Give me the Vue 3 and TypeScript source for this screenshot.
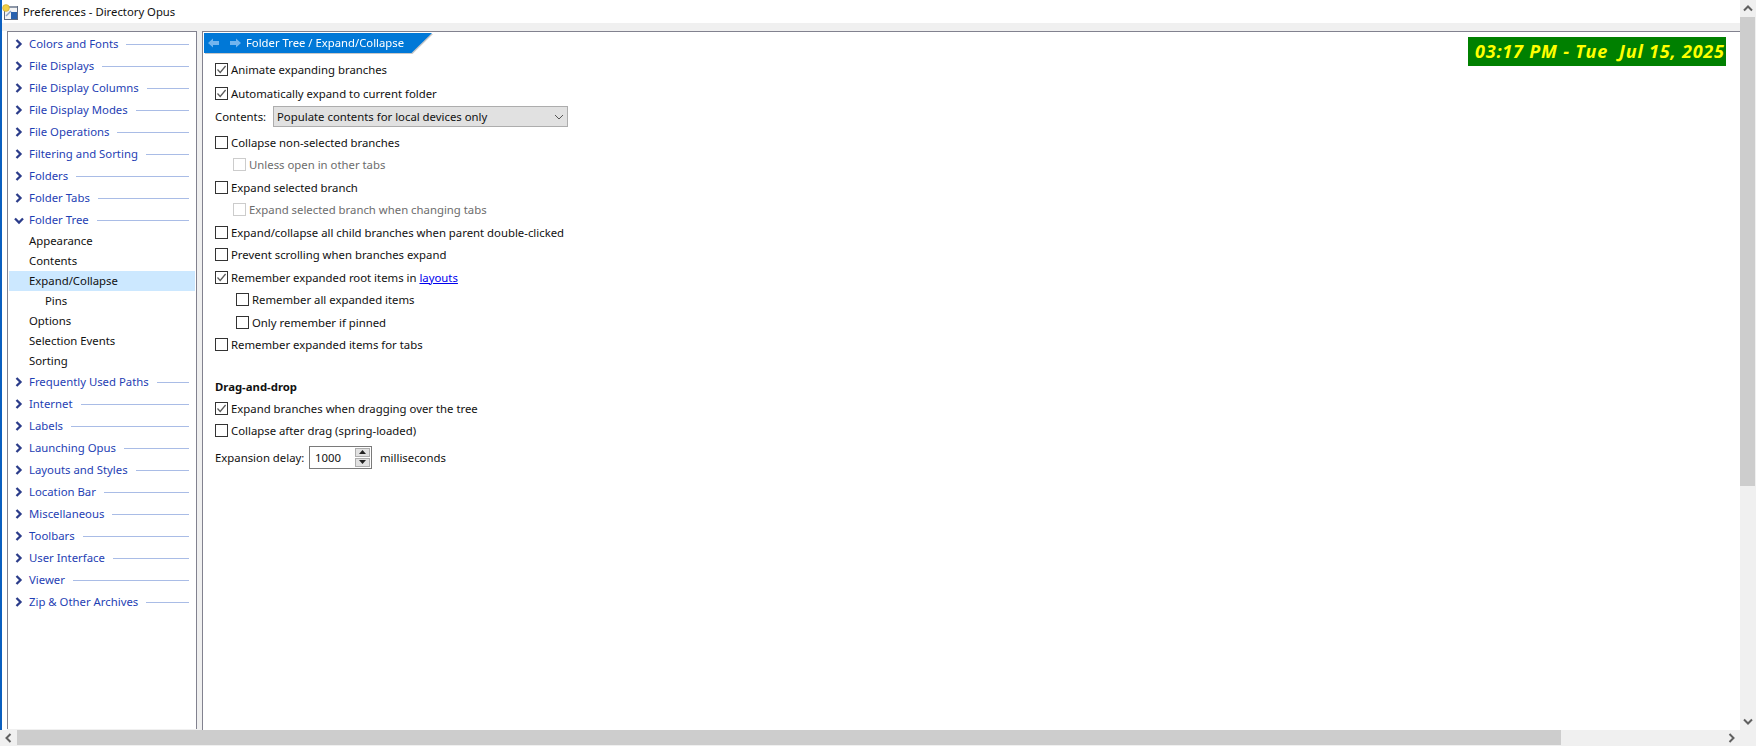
<script setup lang="ts">
interface TreeItem { label: string; kind: 'top' | 'open' | 'sub' | 'sel' | 'deep' }
interface Row {
  label: string; h: number; checked?: boolean; indent?: 'dis' | 'on'; link?: string; kind?: 'head' | 'space'
}
const clock = '03:17 PM - Tue  Jul 15, 2025'
const topA = ['Colors and Fonts','File Displays','File Display Columns','File Display Modes','File Operations','Filtering and Sorting','Folders','Folder Tabs']
const topB = ['Frequently Used Paths','Internet','Labels','Launching Opus','Layouts and Styles','Location Bar','Miscellaneous','Toolbars','User Interface','Viewer','Zip & Other Archives']
const tree: TreeItem[] = [
  ...topA.map((label) => ({ label, kind: 'top' as const })),
  { label: 'Folder Tree', kind: 'open' },
  { label: 'Appearance', kind: 'sub' },
  { label: 'Contents', kind: 'sub' },
  { label: 'Expand/Collapse', kind: 'sel' },
  { label: 'Pins', kind: 'deep' },
  { label: 'Options', kind: 'sub' },
  { label: 'Selection Events', kind: 'sub' },
  { label: 'Sorting', kind: 'sub' },
  ...topB.map((label) => ({ label, kind: 'top' as const })),
]
const groupA: Row[] = [
  { label: 'Animate expanding branches', h: 23, checked: true },
  { label: 'Automatically expand to current folder', h: 24, checked: true },
]
const groupB: Row[] = [
  { label: 'Collapse non-selected branches', h: 22 },
  { label: 'Unless open in other tabs', h: 23, indent: 'dis' },
  { label: 'Expand selected branch', h: 22 },
  { label: 'Expand selected branch when changing tabs', h: 23, indent: 'dis' },
  { label: 'Expand/collapse all child branches when parent double-clicked', h: 22 },
  { label: 'Prevent scrolling when branches expand', h: 23 },
  { label: 'Remember expanded root items in ', h: 22, checked: true, link: 'layouts' },
  { label: 'Remember all expanded items', h: 23, indent: 'on' },
  { label: 'Only remember if pinned', h: 22, indent: 'on' },
  { label: 'Remember expanded items for tabs', h: 23 },
  { label: '', h: 20, kind: 'space' },
  { label: 'Drag-and-drop', h: 21, kind: 'head' },
  { label: 'Expand branches when dragging over the tree', h: 22, checked: true },
  { label: 'Collapse after drag (spring-loaded)', h: 22 },
]
function hasChevron(k: TreeItem['kind']) { return k === 'top' || k === 'open' }
</script>

<template>
  <div class="app">
    <div class="window">
      <div class="titlebar">
        <svg class="appicon" width="16" height="16" viewBox="0 0 16 16">
          <rect x="2.5" y="2.5" width="13" height="13" fill="#f4f4f4" stroke="#5f6b80" />
          <rect x="9" y="8" width="6" height="7" fill="#2a62ae" />
          <path d="M4 12 L9 7" stroke="#8aa2c8" stroke-width="1.5" />
          <rect x="7" y="2" width="8" height="2" fill="#8d97a8" />
          <circle cx="4" cy="4" r="3.4" fill="#f2d045" stroke="#c9a52b" stroke-width=".6" />
        </svg>
        <span class="title">Preferences - Directory Opus</span>
      </div>
      <div class="body">
        <nav class="tree">
          <div v-for="item in tree" :key="item.label" class="node" :class="item.kind">
            <svg v-if="item.kind === 'top'" class="chev" width="8" height="10" viewBox="0 0 8 10">
              <path d="M1.5 1 L5.5 5 L1.5 9" fill="none" stroke="#2b3c8a" stroke-width="2.3" />
            </svg>
            <svg v-else-if="item.kind === 'open'" class="chev chev-open" width="10" height="8" viewBox="0 0 10 8">
              <path d="M1 1.5 L5 5.5 L9 1.5" fill="none" stroke="#2b3c8a" stroke-width="2.3" />
            </svg>
            <span class="nlabel">{{ item.label }}</span>
            <span v-if="hasChevron(item.kind)" class="rule"></span>
          </div>
        </nav>
        <main class="panel">
          <div class="banner-wrap">
            <div class="banner">
              <svg width="12" height="10" viewBox="0 0 12 10" class="arrow-l">
                <path d="M0 5 L5 0.5 V3 H11 V7 H5 V9.5 Z" fill="#73b5ee" />
              </svg>
              <svg width="12" height="10" viewBox="0 0 12 10" class="arrow-r">
                <path d="M12 5 L7 0.5 V3 H1 V7 H7 V9.5 Z" fill="#73b5ee" />
              </svg>
              <span class="crumb">Folder Tree / Expand/Collapse</span>
            </div>
          </div>
          <div class="clock">{{ clock }}</div>
          <div class="form">
            <div v-for="r in groupA" :key="r.label" class="row" :class="'h' + r.h">
              <span class="box"><svg v-if="r.checked" width="11" height="11" viewBox="0 0 11 11"><path d="M1.5 5.5 L4.2 8.4 L9.6 2" fill="none" stroke="#5a5a5a" stroke-width="1.3" /></svg></span>
              <span class="rlabel">{{ r.label }}</span>
            </div>
            <div class="row combo-row">
              <span class="combo-label">Contents:</span>
              <div class="combo">
                <span>Populate contents for local devices only</span>
                <svg width="10" height="6" viewBox="0 0 10 6"><path d="M1 1 L5 5 L9 1" fill="none" stroke="#555" stroke-width="1" /></svg>
              </div>
            </div>
            <template v-for="r in groupB" :key="r.label + r.h">
              <div v-if="r.kind === 'space'" class="spacer"></div>
              <div v-else-if="r.kind === 'head'" class="row head" :class="'h' + r.h">{{ r.label }}</div>
              <div v-else class="row" :class="['h' + r.h, r.indent]">
                <span class="box"><svg v-if="r.checked" width="11" height="11" viewBox="0 0 11 11"><path d="M1.5 5.5 L4.2 8.4 L9.6 2" fill="none" stroke="#5a5a5a" stroke-width="1.3" /></svg></span>
                <span class="rlabel">{{ r.label }}<a v-if="r.link" class="link">{{ r.link }}</a></span>
              </div>
            </template>
            <div class="row spin-row">
              <span class="spin-label">Expansion delay:</span>
              <div class="spin">
                <span>1000</span>
                <div class="btns">
                  <div class="btn"><svg width="7" height="4" viewBox="0 0 7 4"><path d="M3.5 0 L7 4 H0 Z" fill="#222" /></svg></div>
                  <div class="btn"><svg width="7" height="4" viewBox="0 0 7 4"><path d="M3.5 4 L7 0 H0 Z" fill="#222" /></svg></div>
                </div>
              </div>
              <span class="ms">milliseconds</span>
            </div>
          </div>
        </main>
      </div>
    </div>
    <div class="vbar">
      <div class="sbtn"><svg width="10" height="7" viewBox="0 0 10 7"><path d="M1 5.5 L5 1.5 L9 5.5" fill="none" stroke="#606060" stroke-width="2" /></svg></div>
      <div class="vthumb"></div>
      <div class="vtrack"></div>
      <div class="sbtn"><svg width="10" height="7" viewBox="0 0 10 7"><path d="M1 1.5 L5 5.5 L9 1.5" fill="none" stroke="#606060" stroke-width="2" /></svg></div>
    </div>
    <div class="hbar">
      <div class="sbtn-h"><svg width="7" height="10" viewBox="0 0 7 10"><path d="M5.5 1 L1.5 5 L5.5 9" fill="none" stroke="#606060" stroke-width="2" /></svg></div>
      <div class="hthumb"></div>
      <div class="htrack"></div>
      <div class="sbtn-h"><svg width="7" height="10" viewBox="0 0 7 10"><path d="M1.5 1 L5.5 5 L1.5 9" fill="none" stroke="#606060" stroke-width="2" /></svg></div>
    </div>
    <div class="corner"></div>
  </div>
</template>

<style>
html, body { margin: 0; background: #fff; overflow: hidden; }
</style>

<style scoped>
.app {
  width: 1756px; height: 746px; display: grid;
  grid-template-columns: 1740px 16px; grid-template-rows: 730px 16px;
  font-family: "Noto Sans", "Open Sans", sans-serif; font-size: 11.35px; color: #111;
  overflow: hidden;
}
.window { display: flex; flex-direction: column; border-left: 2px solid #0b5fbf; min-width: 0; background: #fff; }
.titlebar { height: 23px; display: flex; align-items: center; background: #fff; flex: none; }
.appicon { flex: none; }
.title { margin-left: 5px; font-size: 11.3px; color: #111; }
.body {
  flex: 1; display: flex; gap: 5px; padding-left: 5px; min-height: 0;
  background: linear-gradient(#f0f0f0, #f0f0f0) 0 0 / 100% 8px no-repeat, linear-gradient(#fff, #fff) 0 0 / 5px 100% no-repeat, #f0f0f0;
}
.tree { width: 190px; flex: none; margin-top: 8px; margin-bottom: 1px; background: #fff; border: 1px solid #82828f; border-bottom: none; box-sizing: border-box; padding-top: 1px; }
.node { display: flex; align-items: center; height: 22px; padding-left: 21px; position: relative; padding-right: 7px; }
.node.top, .node.open { color: #1f3fb4; }
.node.sub, .node.sel, .node.deep { height: 20px; color: #111; }
.node.deep { padding-left: 37px; }
.node.sel { background: #cce8ff; margin: 0 1px; padding-left: 20px; }
.chev { position: absolute; left: 7px; top: 6px; }
.chev-open { left: 6px; top: 8px; }
.nlabel { white-space: nowrap; margin-bottom: 2px; }
.rule { flex: 1; height: 1px; background: #a9bce6; margin-left: 8px; }
.panel { flex: 1; margin-top: 8px; background: #fff; border-left: 1px solid #82828f; border-top: 1px solid #82828f; position: relative; padding: 1px 0 0 1px; min-width: 0; }
.banner-wrap { width: 229px; filter: drop-shadow(1px 1px 0 #c8c8c8); }
.banner {
  width: 228px; height: 20px; background: #0078d7; color: #fff;
  clip-path: polygon(0 0, 100% 0, 91% 100%, 0 100%);
  display: flex; align-items: center;
}
.arrow-l { margin-left: 4px; flex: none; }
.arrow-r { margin-left: 9px; flex: none; }
.crumb { margin-left: 5px; font-size: 11.3px; white-space: nowrap; padding-bottom: 1px; }
.clock {
  position: absolute; left: 1265px; top: 5px; width: 258px; height: 29px; box-sizing: border-box;
  background: #008000; color: #ff0; font: italic 700 18px "Open Sans", sans-serif; letter-spacing: .8px;
  line-height: 29px; padding-left: 7px; white-space: pre;
}
.form { padding: 5px 0 0 11px; }
.row { display: flex; align-items: center; white-space: nowrap; }
.h21 { height: 21px; }
.h22 { height: 22px; }
.h23 { height: 23px; }
.h24 { height: 24px; }
.box { width: 13px; height: 13px; box-sizing: border-box; border: 1px solid #333; margin-right: 3px; flex: none; display: flex; align-items: center; justify-content: center; background: #fff; }
.box svg { flex: none; }
.dis { padding-left: 18px; color: #6d6d6d; }
.dis .box { border-color: #ccc; }
.on { padding-left: 21px; }
.link { color: #0000ee; text-decoration: underline; }
.combo-row { height: 23px; margin-bottom: 3px; }
.combo-label { width: 58px; flex: none; }
.combo { width: 295px; height: 21px; box-sizing: border-box; background: #e1e1e1; border: 1px solid #adadad; display: flex; align-items: center; justify-content: space-between; padding: 0 3px 0 3px; }
.spacer { height: 20px; }
.head { font-weight: 700; }
.spin-row { margin-top: 4px; height: 24px; }
.spin-label { width: 94px; flex: none; }
.spin { width: 63px; height: 23px; box-sizing: border-box; border: 1px solid #7a7a7a; display: flex; align-items: center; justify-content: space-between; padding: 0 1px 0 5px; }
.btns { display: flex; flex-direction: column; gap: 1px; }
.btn { width: 15px; height: 9px; box-sizing: border-box; background: #e1e1e1; border: 1px solid #adadad; display: flex; align-items: center; justify-content: center; }
.ms { margin-left: 8px; }
.vbar { background: #f0f0f0; display: flex; flex-direction: column; }
.sbtn { height: 17px; display: flex; align-items: center; justify-content: center; flex: none; }
.vthumb { height: 469px; width: 15px; background: #cdcdcd; flex: none; }
.vtrack { flex: 1; }
.hbar { background: #f0f0f0; display: flex; }
.sbtn-h { width: 17px; display: flex; align-items: center; justify-content: center; flex: none; }
.hthumb { width: 1544px; background: #cdcdcd; flex: none; margin-bottom: 1px; }
.htrack { flex: 1; }
.corner { background: #f0f0f0; }
</style>
